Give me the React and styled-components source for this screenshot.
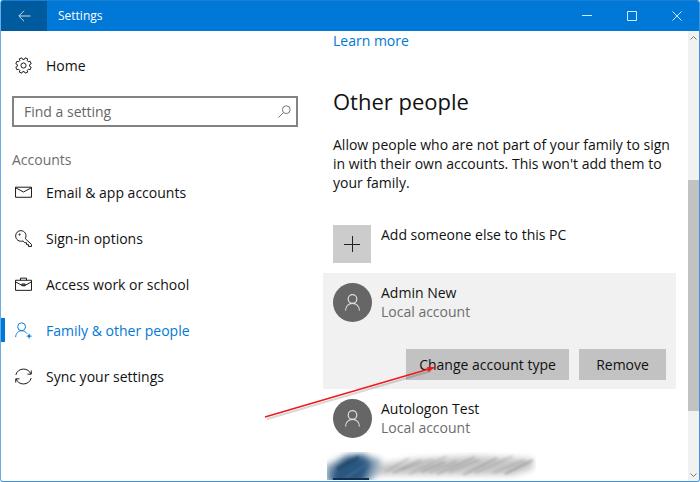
import React from "react";
import styled, { createGlobalStyle } from "styled-components";

const GlobalStyle = createGlobalStyle`
  * { box-sizing: border-box; }
  body {
    margin: 0;
    background: #ffffff;
    color: #111111;
    font-family: "Open Sans", "Noto Sans", sans-serif;
    font-size: 14px;
    line-height: 19px;
  }
  button, input { font: inherit; color: inherit; }
  h1, h2, p, ul { margin: 0; padding: 0; font-weight: 400; }
  ul { list-style: none; }
  svg { display: block; flex: none; }
`;

const Window = styled.div`
  display: flex;
  flex-direction: column;
  height: 100vh;
  overflow: hidden;
  border: 1px solid #3f93d8;
  border-left-color: #67abe7;
  border-top-color: #1a80d4;
  border-radius: 3px;
`;

const TitleBar = styled.header`
  display: flex;
  flex: none;
  height: 30px;
  background: #0078d7;
  color: #ffffff;
`;

const TitleButton = styled.button`
  display: flex;
  align-items: center;
  justify-content: center;
  width: ${({ $back }) => ($back ? "46px" : "45px")};
  padding: 0;
  border: 0;
  background: ${({ $back }) => ($back ? "#005a9e" : "transparent")};
`;

const Title = styled.h1`
  flex: 1;
  padding-left: 11px;
  font-size: 12px;
  line-height: 30px;
`;

const Body = styled.div`
  display: flex;
  flex: 1;
  min-height: 0;
`;

const Sidebar = styled.nav`
  flex: none;
  width: 297px;
  padding-top: 11px;
`;

const NavLink = styled.a`
  display: flex;
  align-items: center;
  gap: 14px;
  height: ${({ $home }) => ($home ? "46px" : "24px")};
  padding-left: 10px;
  border-left: 4px solid ${({ $active }) => ($active ? "#0078d7" : "transparent")};
  color: ${({ $active }) => ($active ? "#0078d7" : "inherit")};
  text-decoration: none;
`;

const NavList = styled.ul`
  display: flex;
  flex-direction: column;
  gap: 22px;
  padding-top: 11px;
`;

const Search = styled.label`
  display: flex;
  align-items: center;
  height: 31px;
  margin: 8px 0 0 11px;
  padding-right: 5px;
  border: 2px solid #828282;

  input {
    flex: 1;
    min-width: 0;
    padding: 0 0 0 10px;
    border: 0;
    outline: 0;
    background: transparent;
  }
  input::placeholder { color: #666666; opacity: 1; }
`;

const NavHeading = styled.h2`
  margin: 23px 0 0 11px;
  color: #6d6d6d;
  font-size: 14px;
`;

const Content = styled.main`
  flex: 1;
  min-width: 0;
  padding: 0 12px 0 25px;
`;

const LearnMore = styled.a`
  display: block;
  margin-left: 10px;
  color: #0078d7;
  text-decoration: none;
`;

const Heading = styled.h2`
  margin: 35px 0 0 10px;
  font-size: 22px;
  line-height: 32px;
`;

const Intro = styled.p`
  margin: 18px 0 0 10px;
`;

const AddButton = styled.button`
  display: flex;
  gap: 10px;
  width: 100%;
  margin-top: 23px;
  padding: 10px;
  border: 0;
  background: transparent;
  text-align: left;
`;

const AddTile = styled.span`
  display: flex;
  align-items: center;
  justify-content: center;
  width: 38px;
  height: 38px;
  background: #cccccc;
`;

const Account = styled.li`
  position: relative;
  padding: 10px 10px 9px;
  background: ${({ $selected }) => ($selected ? "#f1f1f1" : "transparent")};
`;

const Person = styled.div`
  display: flex;
  gap: 9px;
`;

const Avatar = styled.span`
  display: flex;
  align-items: center;
  justify-content: center;
  width: 39px;
  height: 39px;
  border-radius: 50%;
  background: #666666;
`;

const Kind = styled.div`
  color: #6d6d6d;
`;

const Actions = styled.div`
  display: flex;
  justify-content: flex-end;
  gap: 10px;
  margin-top: 27px;
`;

const ActionButton = styled.button`
  height: 31px;
  width: ${({ $wide }) => ($wide ? "163px" : "87px")};
  padding: 0;
  border: 0;
  background: #c2c2c2;
  white-space: nowrap;
`;

const Pointer = styled.svg`
  position: absolute;
  left: -60px;
  bottom: -34px;
  pointer-events: none;
  z-index: 1;
`;

const Redacted = styled.li`
  padding: 5px 0 0 2px;
`;

const ScrollBar = styled.div`
  display: flex;
  flex-direction: column;
  align-items: center;
  justify-content: space-between;
  width: 11px;
  padding: 4px 0 3px;
  background: #f1f1f1;
`;

const Thumb = styled.div`
  flex: 0 0 231px;
  width: 100%;
  margin-top: 78px;
  background: #c2c2c2;
`;

function gearPath() {
  const points = [];
  for (let i = 0; i < 8; i++) {
    [[-15, 5.8], [-10, 7.4], [10, 7.4], [15, 5.8]].forEach(([offset, r]) => {
      const a = ((i * 45 + 22.5 + offset) * Math.PI) / 180;
      points.push(`${(8 + r * Math.cos(a)).toFixed(2)} ${(8 + r * Math.sin(a)).toFixed(2)}`);
    });
  }
  return `M${points.join("L")}Z`;
}

const icons = {
  gear: (
    <>
      <path d={gearPath()} />
      <circle cx="8" cy="8" r="2.4" />
    </>
  ),
  mail: <path d="M.5 3h15v9.500H.5zM.5 3.500l7.500 4 7.500-4" />,
  key: (
    <>
      <path d="M9.700 8.200l5.800 5.300v2h-2.800v-1.700h-1.800V12H9.200L7.600 10.300C4 11.500.6 9 .6 5.500.6 2.800 2.800.6 5.500.6c3.700 0 6 3.700 4.200 7.600z" />
      <circle cx="4.300" cy="4.300" r=".6" />
    </>
  ),
  work: (
    <>
      <path d="M.5 4h15v9.500H.5zM5.200 4V2h5.600v2M.5 5.500l5.500 3h4l5.500-3" />
      <path d="M6.500 7.500h3v1.700h-3z" />
    </>
  ),
  family: (
    <>
      <circle cx="6.200" cy="4.500" r="3.700" />
      <path d="M.6 14.200c.2-3.500 2.500-6 5.600-6 2.300 0 3.900 1 4.900 2.700M13.300 11v4.600M11 13.300h4.600" />
      <path d="M12.700 12.700h1.200v1.200h-1.200z" />
    </>
  ),
  sync: (
    <>
      <path d="M.8 6.500C1.700 3 4.600 1 8 1c3.300 0 5.700 1.800 6.900 4.500M15.200 9.500C14.300 13 11.400 15 8 15c-3.300 0-5.700-1.800-6.900-4.500" />
      <path d="M15.300 2.300v3.500h-3.500M.7 13.700v-3.500h3.500" />
    </>
  ),
};

function Icon({ name }) {
  return (
    <svg width="17" height="17" viewBox="0 0 16 16" fill="none" stroke="currentColor" strokeWidth=".9">
      {icons[name]}
    </svg>
  );
}

function PersonIcon() {
  return (
    <svg width="17" height="19" viewBox="0 0 17 19" fill="none" stroke="#dedede" strokeWidth="1.2">
      <circle cx="8.500" cy="6" r="4.300" />
      <path d="M1.500 17.500c.2-4.200 3-7.200 7-7.200s6.800 3 7 7.200" />
    </svg>
  );
}

function AccountInfo({ name }) {
  return (
    <Person>
      <Avatar><PersonIcon /></Avatar>
      <div>
        <div>{name}</div>
        <Kind>Local account</Kind>
      </div>
    </Person>
  );
}

// Smeared avatar and name of the last account in the list
function Smudge() {
  const strokes = [
    [60, 20, 84, 6, 0.2], [68, 21, 96, 8, 0.22], [84, 22, 122, 4, 0.18], [96, 20, 120, 10, 0.28],
    [112, 22, 150, 5, 0.25], [124, 20, 154, 8, 0.2], [138, 23, 172, 6, 0.3], [150, 21, 188, 4, 0.2],
    [168, 21, 200, 8, 0.2], [180, 22, 208, 8, 0.38], [76, 18, 108, 7, 0.15], [104, 21, 132, 9, 0.2],
  ];
  return (
    <svg width="214" height="28" viewBox="0 0 214 28">
      <defs>
        <filter id="soft" x="-20%" y="-30%" width="140%" height="160%">
          <feGaussianBlur stdDeviation="3" />
        </filter>
        <filter id="streak" x="-20%" y="-30%" width="140%" height="160%">
          <feGaussianBlur stdDeviation="1" />
        </filter>
        <clipPath id="smear"><path d="M2 0h209v28H2z" /></clipPath>
      </defs>
      <g clipPath="url(#smear)">
        <path d="M50 13L90 7l60-3 58 3v10l-20 6H50z" fill="#b4b4b4" opacity=".75" filter="url(#soft)" />
        <path d="M0 14L20 4l18-2 18 6-4 14-8 8H0z" fill="#8ba2b6" filter="url(#soft)" />
        <path d="M8 17L22 5l16-1 8 8-5 12-5 8H6z" fill="#2a5680" filter="url(#soft)" />
        <path d="M12 17L34 5" stroke="#183b5b" strokeWidth="4" opacity=".5" filter="url(#streak)" />
        <path d="M20 26L44 11" stroke="#477297" strokeWidth="3" opacity=".5" filter="url(#streak)" />
        <path d="M8 27h36" stroke="#12304d" strokeWidth="2" />
        {strokes.map(([x1, y1, x2, y2, opacity], i) => (
          <path
            key={i}
            d={`M${x1} ${y1}L${x2} ${y2}`}
            stroke="#707070"
            strokeWidth="2.500"
            opacity={opacity}
            filter="url(#streak)"
          />
        ))}
      </g>
    </svg>
  );
}

const links = [
  ["mail", "Email & app accounts"],
  ["key", "Sign-in options"],
  ["work", "Access work or school"],
  ["family", "Family & other people"],
  ["sync", "Sync your settings"],
];

export default function App() {
  return (
    <Window>
      <GlobalStyle />
      <TitleBar>
        <TitleButton $back aria-label="Back">
          <svg width="13" height="12" viewBox="0 0 13 12" fill="none" stroke="#c5daea">
            <path d="M12.500 6H1M6 .8L.8 6 6 11.200" />
          </svg>
        </TitleButton>
        <Title>Settings</Title>
        <TitleButton aria-label="Minimize">
          <svg width="10" height="10" stroke="#d4e9fa"><path d="M0 4.500h10" /></svg>
        </TitleButton>
        <TitleButton aria-label="Maximize">
          <svg width="10" height="10" fill="none" stroke="#d4e9fa"><path d="M.5.5h9v9h-9z" /></svg>
        </TitleButton>
        <TitleButton aria-label="Close">
          <svg width="10" height="10" stroke="#d4e9fa"><path d="M.5.5l9 9M9.500.5l-9 9" /></svg>
        </TitleButton>
      </TitleBar>
      <Body>
        <Sidebar>
          <NavLink href="#home" $home><Icon name="gear" />Home</NavLink>
          <Search>
            <input type="text" placeholder="Find a setting" aria-label="Find a setting" />
            <svg width="13" height="13" viewBox="0 0 13 13" fill="none" stroke="#777777">
              <circle cx="8.300" cy="4.700" r="3.900" />
              <path d="M5.500 7.500l-5 5" />
            </svg>
          </Search>
          <NavHeading>Accounts</NavHeading>
          <NavList>
            {links.map(([icon, label]) => (
              <li key={icon}>
                <NavLink href={`#${icon}`} $active={icon === "family"}>
                  <Icon name={icon} />
                  {label}
                </NavLink>
              </li>
            ))}
          </NavList>
        </Sidebar>
        <Content>
          <LearnMore href="#learn">Learn more</LearnMore>
          <Heading>Other people</Heading>
          <Intro>
            Allow people who are not part of your family to sign in with their own accounts. This won't add them to
            your family.
          </Intro>
          <AddButton>
            <AddTile>
              <svg width="16" height="16" stroke="#222222"><path d="M0 8.500h16M8.500 0v16" /></svg>
            </AddTile>
            Add someone else to this PC
          </AddButton>
          <ul>
            <Account $selected>
              <AccountInfo name="Admin New" />
              <Actions>
                <ActionButton $wide>Change account type</ActionButton>
                <ActionButton>Remove</ActionButton>
              </Actions>
              <Pointer width="176" height="60" viewBox="0 0 176 60">
                <path d="M4 56L168 8" stroke="#000000" strokeWidth="2" opacity=".15" />
                <path d="M2 54L166 6" stroke="#f01818" strokeWidth="1.400" />
                <path d="M173 4l-8 5-1-5z" fill="#f01818" />
              </Pointer>
            </Account>
            <Account><AccountInfo name="Autologon Test" /></Account>
            <Redacted><Smudge /></Redacted>
          </ul>
        </Content>
        <ScrollBar>
          <svg width="7" height="5" fill="none" stroke="#777777"><path d="M.5 4.500l3-3 3 3" /></svg>
          <Thumb />
          <svg width="7" height="5" fill="none" stroke="#777777"><path d="M.5.5l3 3 3-3" /></svg>
        </ScrollBar>
      </Body>
    </Window>
  );
}
